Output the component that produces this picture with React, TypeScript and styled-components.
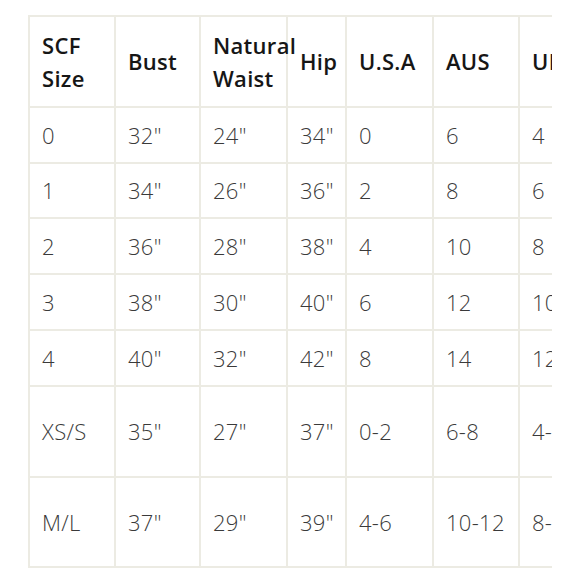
import * as React from "react";
import styled, { createGlobalStyle } from "styled-components";

const GlobalStyle = createGlobalStyle`
    html, body {
        margin: 0;
        padding: 0;
        background: #ffffff;
    }
`;

const Frame = styled.div`
    margin: 15px 0 0 28px;
    width: 524px;
    overflow: hidden;
`;

const Grid = styled.div`
    display: grid;
    grid-template-columns: 86px 85px 87px 59px 87px 86px 86px 86px;
    grid-template-rows: 91px 56px 55px 56px 56px 56px 91px 90px;
    width: max-content;
    border-top: 2px solid #ecebe3;
    border-left: 2px solid #ecebe3;
    font-family: "Open Sans", "Liberation Sans", sans-serif;
`;

const Cell = styled.div<{ $head?: boolean }>`
    box-sizing: border-box;
    display: flex;
    align-items: center;
    padding: 0 0 0 12px;
    border-right: 2px solid #ecebe3;
    border-bottom: 2px solid #ecebe3;
    font-size: 22px;
    line-height: 33px;
    letter-spacing: 0.3px;
    font-weight: ${p => (p.$head ? 600 : 300)};
    color: ${p => (p.$head ? "#161616" : "#3a3a3a")};
    white-space: pre;
`;

const headers = ["SCF\nSize", "Bust", "Natural\nWaist", "Hip", "U.S.A", "AUS", "UK", "EU"];

const rows = [
    ["0", "32\"", "24\"", "34\"", "0", "6", "4", "32"],
    ["1", "34\"", "26\"", "36\"", "2", "8", "6", "34"],
    ["2", "36\"", "28\"", "38\"", "4", "10", "8", "36"],
    ["3", "38\"", "30\"", "40\"", "6", "12", "10", "38"],
    ["4", "40\"", "32\"", "42\"", "8", "14", "12", "40"],
    ["XS/S", "35\"", "27\"", "37\"", "0-2", "6-8", "4-6", "32-34"],
    ["M/L", "37\"", "29\"", "39\"", "4-6", "10-12", "8-10", "36-38"],
];

export default function App() {
    return (
        <>
            <GlobalStyle />
            <Frame>
                <Grid>
                    {headers.map(h => (
                        <Cell key={h} $head>{h}</Cell>
                    ))}
                    {rows.map((row, i) =>
                        row.map((v, j) => <Cell key={i + "-" + j}>{v}</Cell>)
                    )}
                </Grid>
            </Frame>
        </>
    );
}
